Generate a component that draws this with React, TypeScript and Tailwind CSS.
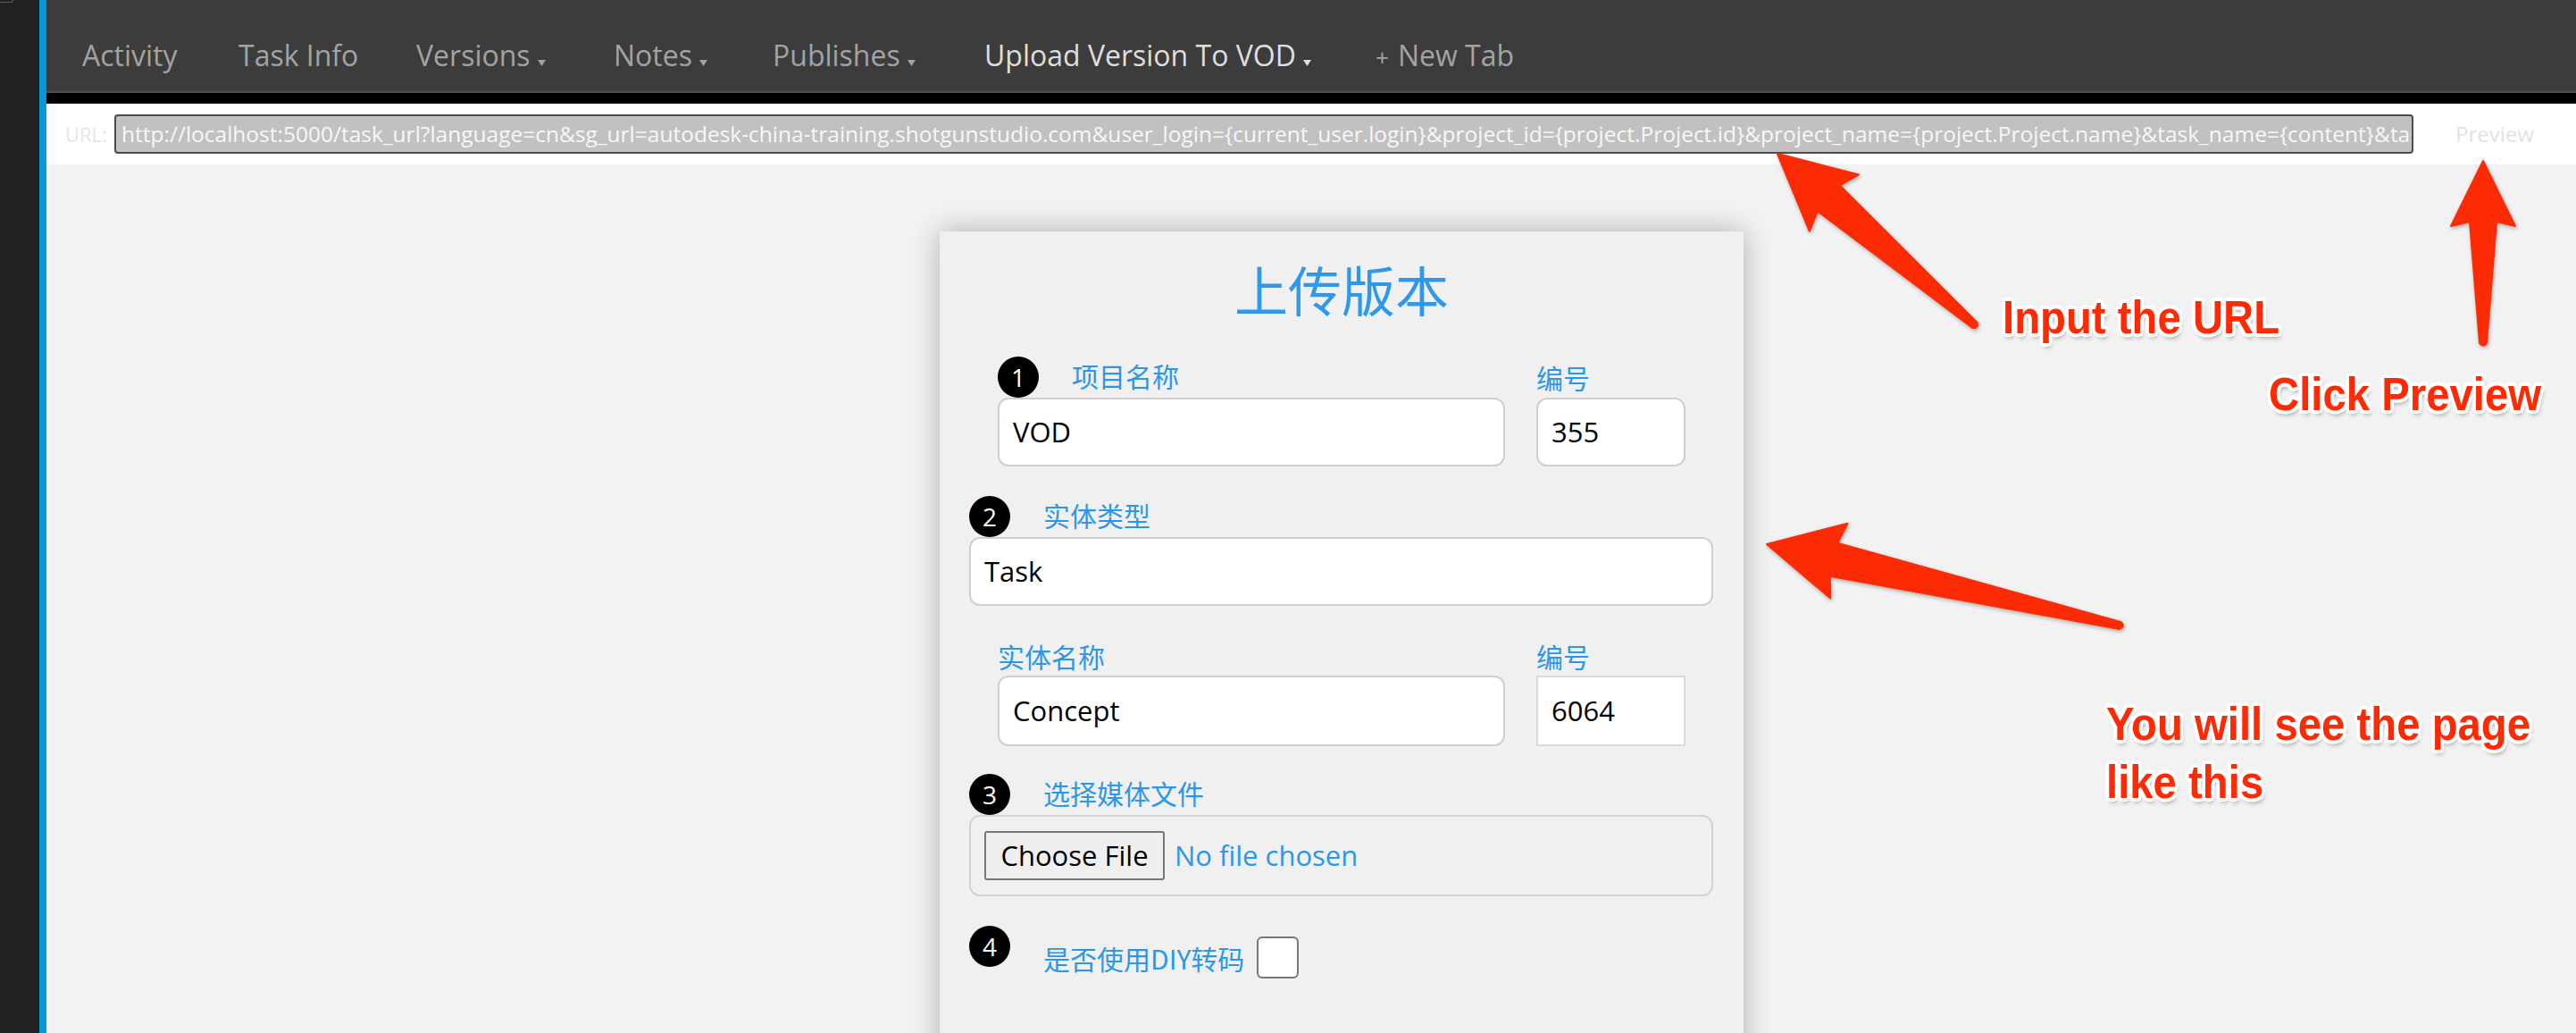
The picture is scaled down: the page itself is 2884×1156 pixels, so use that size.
import React from "react";

type P = [number, number];

function arrowPath(
  tip: P,
  tail: P,
  headLen: number,
  headW: number,
  notchLen: number,
  neckW: number,
  tailW: number
) {
  const dx = tail[0] - tip[0];
  const dy = tail[1] - tip[1];
  const L = Math.hypot(dx, dy);
  const ux = dx / L;
  const uy = dy / L;
  const px = -uy;
  const py = ux;
  const pt = (a: number, b: number) =>
    `${(tip[0] + ux * a + px * b).toFixed(1)},${(tip[1] + uy * a + py * b).toFixed(1)}`;
  return `M${pt(0, 0)} L${pt(headLen, -headW)} L${pt(notchLen, -neckW)} L${pt(L, -tailW)} Q${pt(
    L + tailW * 1.4,
    0
  )} ${pt(L, tailW)} L${pt(notchLen, neckW)} L${pt(headLen, headW)} Z`;
}

const Caret = () => (
  <svg width="9" height="7" viewBox="0 0 9 7" className="ml-[8px] inline-block">
    <path d="M0 0H9L4.5 7Z" fill="currentColor" />
  </svg>
);

const Badge = ({ n }: { n: string }) => (
  <div className="flex h-[46px] w-[46px] shrink-0 items-center justify-center rounded-full bg-black font-['Open_Sans',sans-serif] text-[28px] leading-none text-white">
    {n}
  </div>
);

const Label = ({ children }: { children: React.ReactNode }) => (
  <span className="font-['Noto_Sans_CJK_SC',sans-serif] text-[30px] leading-none whitespace-nowrap text-[#2b97ea]">
    {children}
  </span>
);

const Field = ({ value, h, square }: { value: string; h: string; square?: boolean }) => (
  <div
    className={
      "flex items-center border-2 bg-white px-[15px] font-['Open_Sans',sans-serif] text-[31px] text-black " +
      h +
      (square ? " border-[#dadada]" : " rounded-[12px] border-[#cfcfcf]")
    }
  >
    {value}
  </div>
);

const outline =
  "[text-shadow:-3px_-3px_0_#fff,3px_-3px_0_#fff,-3px_3px_0_#fff,3px_3px_0_#fff,0_-4px_0_#fff,0_4px_0_#fff,-4px_0_0_#fff,4px_0_0_#fff,2px_5px_6px_rgba(0,0,0,0.35)]";

export default function App() {
  const url =
    "http://localhost:5000/task_url?language=cn&sg_url=autodesk-china-training.shotgunstudio.com&user_login={current_user.login}&project_id={project.Project.id}&project_name={project.Project.name}&task_name={content}&task_id={id}&entity_type={entity.Task.type}";

  return (
    <div className="relative flex h-[1156px] w-[2884px] overflow-hidden bg-[#f2f2f2]">
      {/* left dark sidebar */}
      <div className="w-[44px] shrink-0 bg-[#222222]">
        <div className="h-[3px] w-[15px] rounded-br-[3px] border-b border-r border-[#5a5a5a]" />
      </div>
      <div className="w-[8px] shrink-0 bg-[#0b96d9]" />

      <div className="flex min-w-0 flex-1 flex-col overflow-hidden">
        {/* nav */}
        <div className="flex h-[102px] shrink-0 items-center bg-[#3c3c3c] pl-[40px] pt-[22px] font-['Open_Sans',sans-serif] text-[32px] text-[#a3a3a3]">
          <div className="flex w-[175px] shrink-0 items-baseline">Activity</div>
          <div className="flex w-[199px] shrink-0 items-baseline">Task Info</div>
          <div className="flex w-[221px] shrink-0 items-baseline">
            Versions
            <Caret />
          </div>
          <div className="flex w-[178px] shrink-0 items-baseline">
            Notes
            <Caret />
          </div>
          <div className="flex w-[237px] shrink-0 items-baseline">
            Publishes
            <Caret />
          </div>
          <div className="flex w-[438px] shrink-0 items-baseline text-[#dedede]">
            Upload Version To VOD
            <Caret />
          </div>
          <div className="flex shrink-0 items-baseline">
            <span className="mr-[10px] text-[26px]">+</span>New Tab
          </div>
        </div>
        <div className="h-[2px] shrink-0 bg-[#505050]" />
        <div className="h-[12px] shrink-0 bg-black" />

        {/* url row */}
        <div className="flex h-[68px] shrink-0 items-center bg-white pl-[21px] font-['Open_Sans',sans-serif]">
          <div className="w-[55px] shrink-0 text-[22px] text-[#e6e6e6]">URL:</div>
          <div className="h-[44px] w-[2574px] shrink-0 overflow-hidden whitespace-nowrap rounded-[4px] border-2 border-[#4c4c4c] bg-[#c1c1c1] px-[6px] text-[24.5px] leading-[40px] text-[#f7f7f7]">
            {url}
          </div>
          <div className="ml-[47px] shrink-0 text-[24px] text-[#e2e2e2]">Preview</div>
        </div>

        {/* content */}
        <div className="min-h-0 flex-1 bg-[#f2f2f2] pl-[1000px] pt-[75px]">
          <div className="h-[1000px] w-[900px] bg-[#f0f0f0] pt-[34px] shadow-[0_0_30px_rgba(0,0,0,0.28)]">
            <div className="text-center font-['Noto_Sans_CJK_SC',sans-serif] text-[60px] leading-[60px] text-[#2d98ec]">
              上传版本
            </div>

            {/* row 1 */}
            <div className="ml-[65px] mt-[46px] flex gap-[35px]">
              <div className="w-[568px]">
                <div className="flex h-[46px] items-center">
                  <Badge n="1" />
                  <div className="ml-[37px]">
                    <Label>项目名称</Label>
                  </div>
                </div>
                <Field value="VOD" h="h-[77px]" />
              </div>
              <div className="w-[167px]">
                <div className="flex h-[46px] items-center">
                  <Label>编号</Label>
                </div>
                <Field value="355" h="h-[77px]" />
              </div>
            </div>

            {/* row 2 */}
            <div className="ml-[33px] mt-[33px] w-[833px]">
              <div className="flex h-[46px] items-center">
                <Badge n="2" />
                <div className="ml-[37px]">
                  <Label>实体类型</Label>
                </div>
              </div>
              <Field value="Task" h="h-[77px]" />
            </div>

            {/* row 3 */}
            <div className="ml-[65px] mt-[34px] flex gap-[35px]">
              <div className="w-[568px]">
                <div className="flex h-[44px] items-center">
                  <Label>实体名称</Label>
                </div>
                <Field value="Concept" h="h-[79px]" />
              </div>
              <div className="w-[167px]">
                <div className="flex h-[44px] items-center">
                  <Label>编号</Label>
                </div>
                <Field value="6064" h="h-[79px]" square />
              </div>
            </div>

            {/* row 4 */}
            <div className="ml-[33px] mt-[31px] w-[833px]">
              <div className="flex h-[46px] items-center">
                <Badge n="3" />
                <div className="ml-[37px]">
                  <Label>选择媒体文件</Label>
                </div>
              </div>
              <div className="flex h-[91px] items-center rounded-[12px] border-2 border-[#d3d3d3] px-[15px] font-['Open_Sans',sans-serif] text-[31px]">
                <div className="flex h-[55px] w-[202px] shrink-0 items-center justify-center rounded-[3px] border-2 border-[#767676] bg-[#efefef] text-black">
                  Choose File
                </div>
                <span className="ml-[11px] text-[#2b97ea]">No file chosen</span>
              </div>
            </div>

            {/* row 5 */}
            <div className="ml-[33px] mt-[33px] flex items-start">
              <Badge n="4" />
              <div className="ml-[37px] mt-[12px] flex h-[47px] items-center">
                <Label>是否使用DIY转码</Label>
                <div className="ml-[14px] h-[47px] w-[47px] rounded-[6px] border-2 border-[#777777] bg-white" />
              </div>
            </div>
          </div>
        </div>
      </div>

      {/* annotation arrows */}
      <svg
        className="pointer-events-none absolute left-0 top-0 drop-shadow-[1px_2px_2px_rgba(0,0,0,0.3)]"
        width="2884"
        height="1156"
        viewBox="0 0 2884 1156"
      >
        <g fill="#fc2b06" stroke="#fc2b06" strokeWidth="2" strokeLinejoin="round">
          <path d={arrowPath([1990, 172], [2211, 364], 84, 42, 76, 19, 4)} />
          <path d={arrowPath([2780, 180], [2780, 384], 73, 36, 68, 15, 4)} />
          <path d={arrowPath([1978, 609], [2374, 700], 83, 43, 77, 19, 4)} />
        </g>
      </svg>

      {/* annotation texts */}
      <div
        className={
          "pointer-events-none absolute left-[2242px] top-[329px] origin-left scale-x-[0.91] whitespace-nowrap font-['Liberation_Sans',Arial,sans-serif] text-[52px] font-bold leading-none text-[#fc2b06] " +
          outline
        }
      >
        Input the URL
      </div>
      <div
        className={
          "pointer-events-none absolute left-[2540px] top-[415px] origin-left scale-x-[0.91] whitespace-nowrap font-['Liberation_Sans',Arial,sans-serif] text-[52px] font-bold leading-none text-[#fc2b06] " +
          outline
        }
      >
        Click Preview
      </div>
      <div
        className={
          "pointer-events-none absolute left-[2358px] top-[778px] origin-left scale-x-[0.91] whitespace-nowrap font-['Liberation_Sans',Arial,sans-serif] text-[52px] font-bold leading-[65px] text-[#fc2b06] " +
          outline
        }
      >
        You will see the page
        <br />
        like this
      </div>
    </div>
  );
}
